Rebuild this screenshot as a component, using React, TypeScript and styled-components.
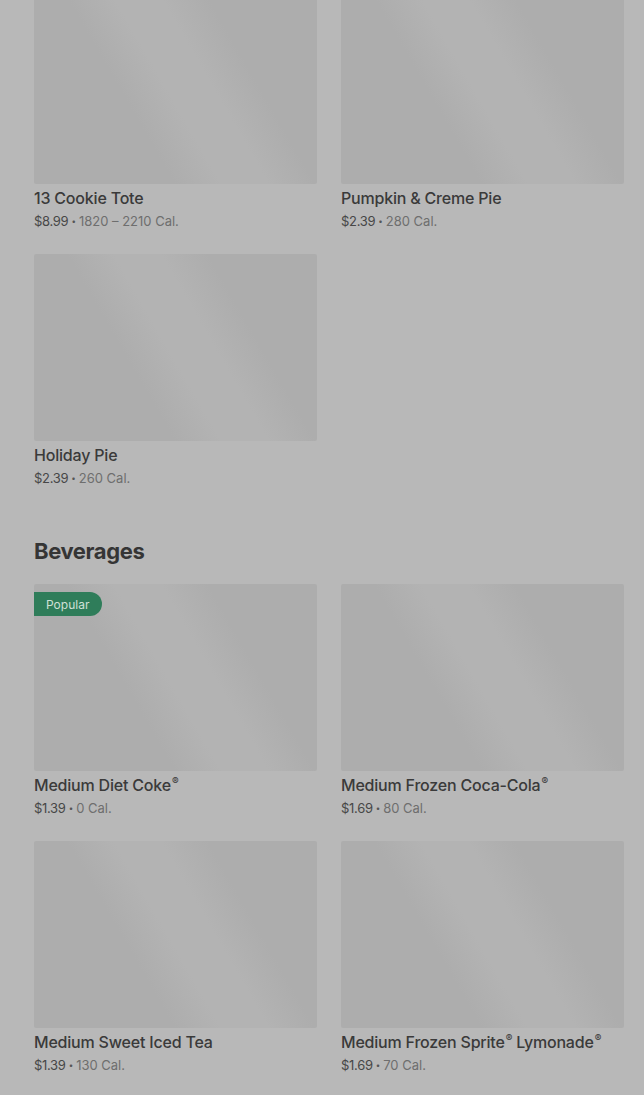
import * as React from "react";
import styled, { createGlobalStyle } from "styled-components";

const GlobalStyle = createGlobalStyle`
  html, body {
    margin: 0;
    padding: 0;
    background: #b8b8b8;
  }
  body {
    font-family: Inter, "Noto Sans", "Liberation Sans", sans-serif;
    -webkit-font-smoothing: antialiased;
  }
`;

const Page = styled.div`
  width: 644px;
  height: 1095px;
  overflow: hidden;
  background: #b8b8b8;
`;

const Content = styled.div`
  margin-top: -3px;
  padding: 0 20px 0 34px;
`;

const Section = styled.section`
  & + & {
    margin-top: 47px;
  }
`;

const Heading = styled.h2`
  margin: 0 0 17px;
  font-size: 22px;
  line-height: 32px;
  font-weight: 700;
  letter-spacing: -0.4px;
  color: #353535;
`;

const Grid = styled.div`
  display: grid;
  grid-template-columns: 283px 283px;
  column-gap: 24px;
  row-gap: 23px;
`;

const Item = styled.div`
  display: flex;
  flex-direction: column;
`;

const Thumb = styled.div`
  position: relative;
  height: 187px;
  border-radius: 2px;
  background: linear-gradient(
    60deg,
    #adadad 0%,
    #adadad 36%,
    #b3b3b3 48%,
    #b3b3b3 60%,
    #adadad 72%,
    #adadad 100%
  );
`;

const Badge = styled.span`
  position: absolute;
  top: 8px;
  left: 0;
  height: 24px;
  padding: 0 13px 0 12px;
  display: flex;
  align-items: center;
  border-radius: 0 12px 12px 0;
  background: #2f7d5a;
  color: #cfe0d6;
  font-size: 12px;
  font-weight: 400;
`;

const Name = styled.div`
  margin-top: 4px;
  font-size: 16px;
  line-height: 20px;
  font-weight: 500;
  letter-spacing: -0.2px;
  color: #3a3a3a;
  white-space: nowrap;
`;

const Reg = styled.sup`
  font-size: 10px;
  line-height: 0;
  vertical-align: 6px;
  margin-left: 1px;
`;

const Meta = styled.div`
  margin-top: 3px;
  font-size: 13px;
  line-height: 20px;
  color: #6e6e6e;
  white-space: nowrap;

  .price {
    color: #474747;
    letter-spacing: -0.3px;
  }
  .dot {
    font-size: 8px;
    margin: 0 3px;
    vertical-align: 2px;
    color: #555;
  }
`;

interface IProduct {
  name: string;
  price: string;
  cal: string;
  popular?: boolean;
}

const desserts: IProduct[] = [
  { name: "13 Cookie Tote", price: "$8.99", cal: "1820 – 2210 Cal." },
  { name: "Pumpkin & Creme Pie", price: "$2.39", cal: "280 Cal." },
  { name: "Holiday Pie", price: "$2.39", cal: "260 Cal." },
];

const beverages: IProduct[] = [
  { name: "Medium Diet Coke®", price: "$1.39", cal: "0 Cal.", popular: true },
  { name: "Medium Frozen Coca-Cola®", price: "$1.69", cal: "80 Cal." },
  { name: "Medium Sweet Iced Tea", price: "$1.39", cal: "130 Cal." },
  { name: "Medium Frozen Sprite® Lymonade®", price: "$1.69", cal: "70 Cal." },
];

// render ® as a small raised mark like the menu does
function renderName(name: string) {
  return name.split("®").map((part, i, all) => (
    <React.Fragment key={i}>
      {part}
      {i < all.length - 1 && <Reg>®</Reg>}
    </React.Fragment>
  ));
}

function ProductCard(props: { product: IProduct }) {
  const p = props.product;
  return (
    <Item>
      <Thumb>{p.popular && <Badge>Popular</Badge>}</Thumb>
      <Name>{renderName(p.name)}</Name>
      <Meta>
        <span className="price">{p.price}</span>
        <span className="dot">•</span>
        {p.cal}
      </Meta>
    </Item>
  );
}

export default function App() {
  return (
    <Page>
      <GlobalStyle />
      <Content>
        <Section>
          <Grid>
            {desserts.map((p) => (
              <ProductCard key={p.name} product={p} />
            ))}
          </Grid>
        </Section>
        <Section>
          <Heading>Beverages</Heading>
          <Grid>
            {beverages.map((p) => (
              <ProductCard key={p.name} product={p} />
            ))}
          </Grid>
        </Section>
      </Content>
    </Page>
  );
}
